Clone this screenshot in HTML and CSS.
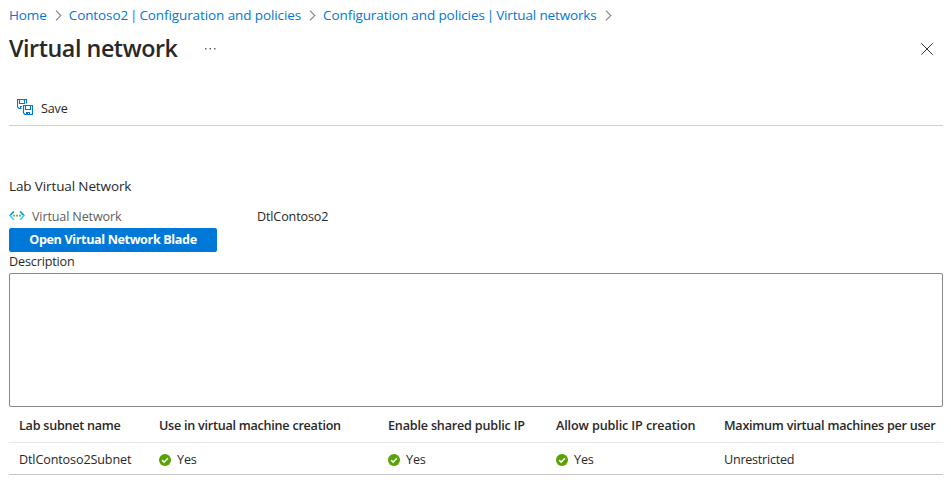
FILE: index.html
```html
<!DOCTYPE html>
<html lang="en">
<head>
<meta charset="utf-8">
<title>Virtual network</title>
<link rel="stylesheet" href="styles.css">
</head>
<body>
<svg class="defs" width="0" height="0" aria-hidden="true">
  <symbol id="chevron" viewBox="0 0 7 11"><path d="M1 .7 5.8 5.5 1 10.3" fill="none" stroke="#858585" stroke-width="1.1"/></symbol>
  <symbol id="check" viewBox="0 0 12 12"><circle cx="6" cy="6" r="6" fill="#57a300"/><path d="m3.1 6.1 2 2 3.8-3.9" fill="none" stroke="#fff" stroke-width="1.5"/></symbol>
</svg>
<nav class="crumbs">
  <a>Home</a><svg class="chev"><use href="#chevron"/></svg>
  <a>Contoso2 <span class="bar">|</span> Configuration and policies</a><svg class="chev"><use href="#chevron"/></svg>
  <a>Configuration and policies <span class="bar">|</span> <span class="current">Virtual networks</span></a><svg class="chev"><use href="#chevron"/></svg>
</nav>
<header class="title-row">
  <h1>Virtual network</h1>
  <svg class="more" viewBox="0 0 12 2"><path d="M1 0h1.5v1.5H1zM5.500 0h1.500v1.500H5.500zM10 0h1.500v1.500H10z" fill="#666"/></svg>
  <svg class="close" viewBox="0 0 12 12"><path d="m.3.3 11.4 11.4M11.7.3.3 11.7" stroke="#323130" stroke-width="1"/></svg>
</header>
<div class="toolbar">
  <svg class="save-icon" viewBox="0 0 16 16" fill="none" stroke="#0078d4" stroke-width="1.15">
    <path d="M4.500 9.500H2L.5 8V.5h9v4M2.500.5v4h5v-4M3.500 9.500v-2h1.500"/>
    <path d="M6.500 6.500h9v9H8L6.500 14zM8.500 6.500v4h5v-4M9.500 15.500v-2h3v2M10.500 13.500v2"/>
  </svg>
  <span class="save">Save</span>
</div>
<main>
  <h2>Lab Virtual Network</h2>
  <div class="resource">
    <svg class="vnet" viewBox="0 0 16 10"><path d="M4.800.500.800 4.800M11.200.500l4 4.300" stroke="#1490df" stroke-width="1.700"/><path d="m.8 4.300 4 4.500M15.200 4.300l-4 4.500" stroke="#32d4f5" stroke-width="1.700"/><g fill="#76bc2d"><circle cx="5" cy="4.700" r="1.100"/><circle cx="8" cy="4.700" r="1.100"/><circle cx="11" cy="4.700" r="1.100"/></g></svg>
    <span class="label">Virtual Network</span>
    <span class="value">DtlContoso2</span>
  </div>
  <button><span>Open Virtual Network Blade</span></button>
  <label for="description">Description</label>
  <textarea id="description"></textarea>
  <div class="table">
    <div class="row head">
      <span>Lab subnet name</span><span>Use in virtual machine creation</span><span class="shared">Enable shared public IP</span><span class="public">Allow public IP creation</span><span>Maximum virtual machines per user</span>
    </div>
    <div class="row data">
      <span class="subnet">DtlContoso2Subnet</span>
      <span class="yes"><svg><use href="#check"/></svg>Yes</span>
      <span class="yes"><svg><use href="#check"/></svg>Yes</span>
      <span class="yes"><svg><use href="#check"/></svg>Yes</span>
      <span class="limit">Unrestricted</span>
    </div>
  </div>
</main>
</body>
</html>
```
FILE: styles.css
```css
* { box-sizing: border-box; }
body { margin: 0; padding: 0 8px 0 9px; height: 485px; overflow: hidden; background: #fff; color: #292827; font: 12.6px/18px "Open Sans", "Noto Sans", sans-serif; letter-spacing: -.15px; white-space: nowrap; }
svg { display: block; flex: none; }
.defs { position: absolute; }
.crumbs { display: flex; align-items: center; height: 29px; font-size: 13.5px; letter-spacing: -.1px; color: #0078d4; }
.bar { margin: 0 -1.4px; }
.current { letter-spacing: -.15px; }
.chev { width: 7px; height: 11px; margin: 2px 7px 0 8px; }
.title-row { display: flex; align-items: center; height: 38px; }
h1 { margin: 0; width: 195px; font-size: 23.3px; line-height: 32px; font-weight: 600; letter-spacing: -.45px; }
.more { width: 12px; height: 2px; margin-top: 1px; }
.close { width: 12px; height: 12px; margin-left: auto; margin-right: 10px; margin-top: 2px; }
.toolbar { display: flex; align-items: center; height: 59px; padding: 24px 0 0 8px; border-bottom: 1px solid #d2d0ce; }
.save-icon { width: 16px; height: 16px; margin: -3px 8px 0 0; }
.save { padding-top: 2px; }
h2 { margin: 50px 0 0; font-size: 13.5px; line-height: 20px; font-weight: 400; letter-spacing: -.12px; }
.resource { display: flex; align-items: center; height: 20px; margin-top: 11px; }
.vnet { width: 16px; height: 10px; margin-right: 7px; margin-top: -2px; fill: none; }
.label { width: 225px; color: #605e5c; }
button { display: block; width: 208px; height: 24px; margin-top: 1px; padding: 0; border: 0; border-radius: 2px; background: #0078d7; color: #fff; font: 700 12.6px/22px "Open Sans", sans-serif; letter-spacing: -.37px; }
label { display: block; height: 21px; line-height: 19px; }
textarea { display: block; width: 934px; height: 134px; border: 1px solid #8a8886; border-radius: 2px; resize: none; }
.row { display: grid; grid-template-columns: 140px 229px 168px 168px auto; padding-left: 10px; align-items: center; }
.head { height: 36px; padding-top: 2px; font-weight: 600; letter-spacing: -.25px; border-bottom: 1px solid #e8e8e8; }
.shared { letter-spacing: -.19px; }
.public { letter-spacing: -.11px; }
.data { height: 32px; padding-top: 3px; border-bottom: 1px solid #c8c6c4; }
.subnet { letter-spacing: -.13px; }
.limit { letter-spacing: -.25px; }
.yes { display: flex; align-items: center; gap: 6px; }
.yes svg { width: 12px; height: 12px; margin-top: -1px; }
```
